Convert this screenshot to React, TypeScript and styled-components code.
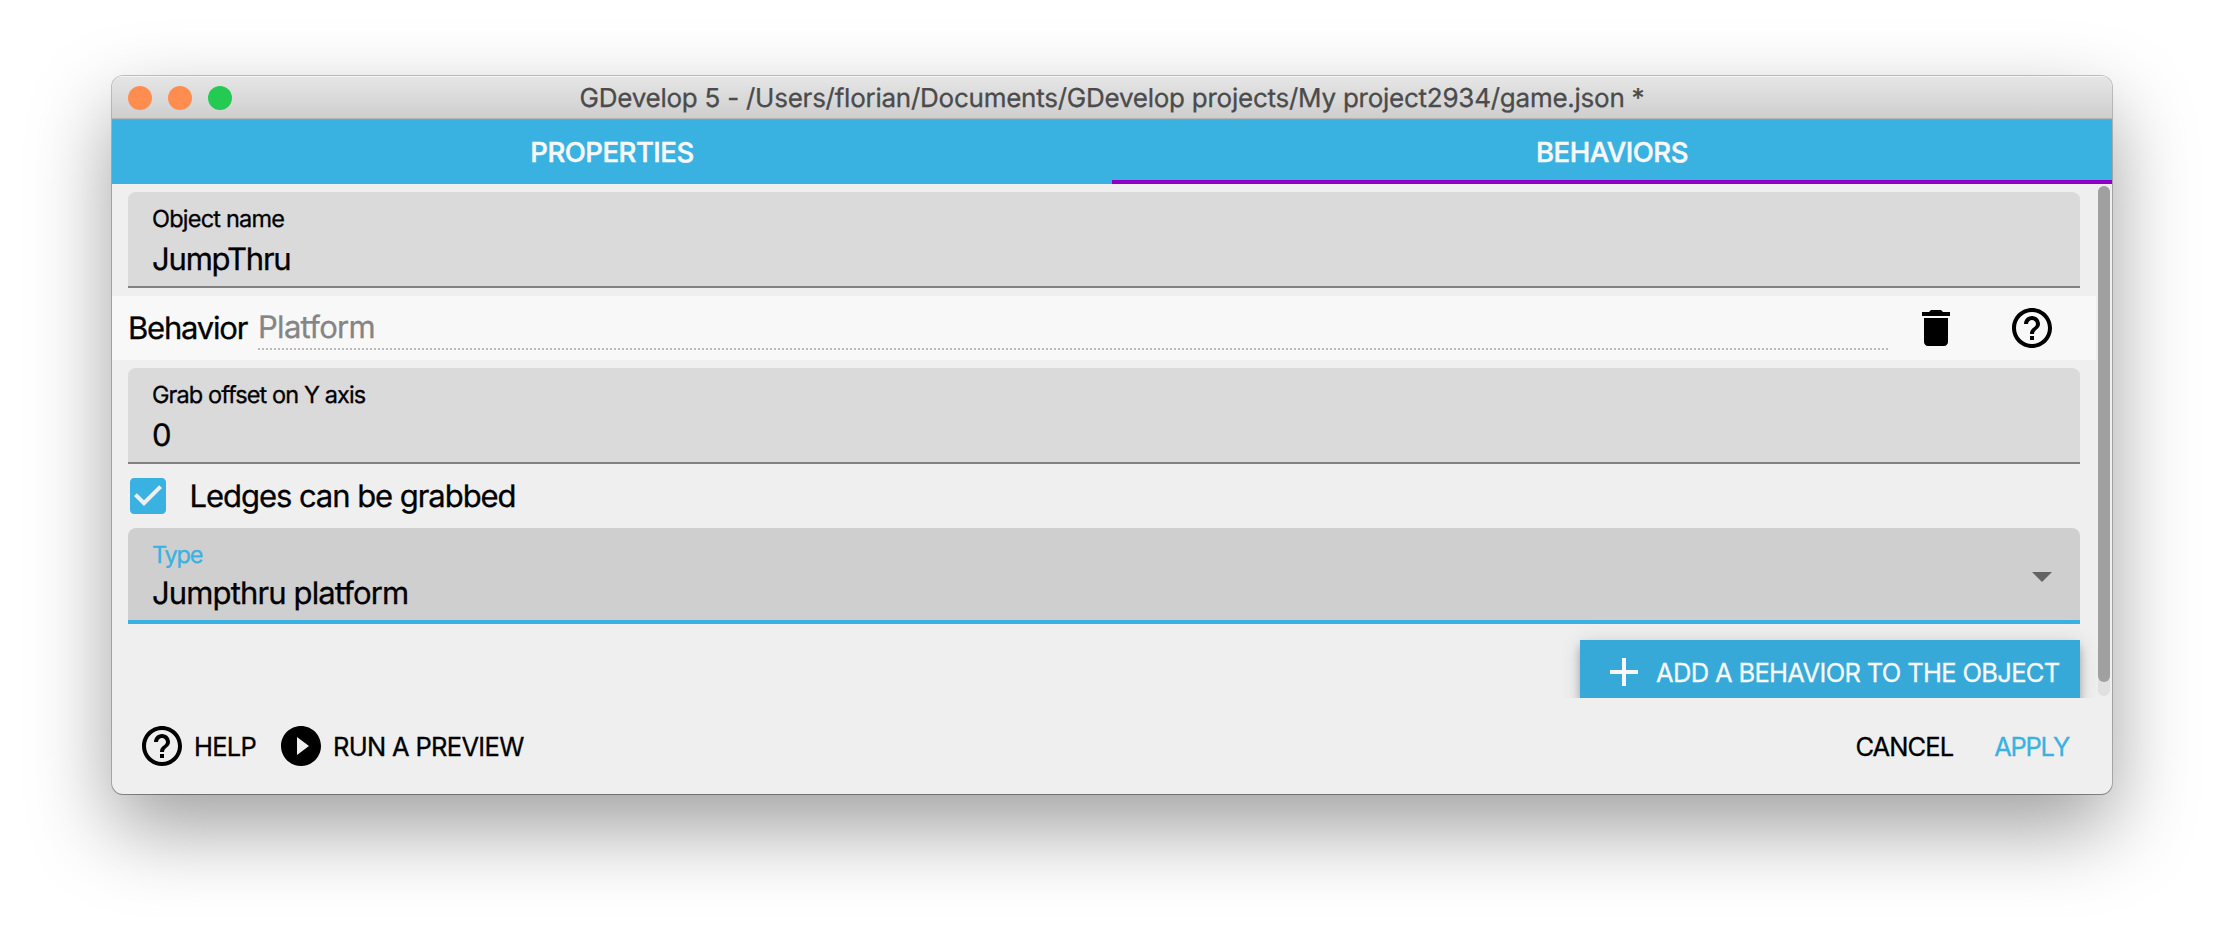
import React from 'react';
import styled, { createGlobalStyle } from 'styled-components';

const GlobalStyle = createGlobalStyle`
  * { box-sizing: border-box; }
  body {
    margin: 0;
    background: #ffffff;
    color: #000000;
    font-family: Inter, Roboto, "Liberation Sans", sans-serif;
    text-rendering: geometricPrecision;
    -webkit-text-stroke: 0.3px currentColor;
  }
`;

const Desktop = styled.main`
  width: 2224px;
  height: 942px;
  padding: 76px 112px 148px;
  overflow: hidden;
`;

const AppWindow = styled.section`
  display: flex;
  flex-direction: column;
  height: 718px;
  border-radius: 11px;
  overflow: hidden;
  background: #efefef;
  box-shadow:
    0 1px 0 0 rgba(0, 0, 0, 0.2),
    0 0 0 1px rgba(0, 0, 0, 0.22),
    0 34px 82px rgba(0, 0, 0, 0.38);
`;

const TitleBar = styled.header`
  display: grid;
  grid-template-columns: 1fr auto 1fr;
  align-items: center;
  height: 44px;
  padding: 0 16px;
  background: linear-gradient(#e6e6e6, #cecece);
  border-bottom: 1px solid #999999;
  box-shadow: inset 0 1px 0 #f4f4f4, inset 0 -1px 0 #b4b4b4;
`;

const Lights = styled.div`
  display: flex;
  gap: 16px;
  padding-top: 1px;
`;

const Light = styled.span<{ $color: string }>`
  width: 24px;
  height: 24px;
  border-radius: 50%;
  background: ${(p) => p.$color};
`;

const WindowTitle = styled.h1`
  margin: 0;
  padding-top: 3px;
  font-size: 26px;
  font-weight: 400;
  line-height: 40px;
  letter-spacing: -0.247px;
  color: #4b4b4b;
  white-space: nowrap;
`;

const Tabs = styled.nav`
  display: grid;
  grid-template-columns: 1fr 1fr;
  height: 64px;
  background: #39b2e2;
`;

const Tab = styled.button<{ $active?: boolean; $tracking: number }>`
  padding: 0;
  border: 0;
  background: none;
  box-shadow: ${(p) => (p.$active ? 'inset 0 -4px 0 #8f00c7' : 'none')};
  color: #f8f8f8;
  font: 500 27.5px/64px Inter, sans-serif;
  letter-spacing: ${(p) => p.$tracking}px;
  -webkit-text-stroke: 0.5px currentColor;
`;

const ScrollArea = styled.div`
  display: flex;
  height: 514px;
  overflow: hidden;
`;

const Content = styled.div`
  flex: 1;
  padding-top: 8px;
`;

const ScrollTrack = styled.div`
  width: 12px;
  height: 510px;
  margin: 2px 2px 0;
  border-radius: 6px;
  background: #e0e0e0;
`;

const ScrollThumb = styled.div`
  height: 496px;
  border-radius: 6px;
  background: #a0a0a0;
`;

const Field = styled.div<{ $focused?: boolean }>`
  display: flex;
  align-items: center;
  justify-content: space-between;
  height: 96px;
  margin: 0 16px;
  padding-left: 24px;
  border-radius: 8px 8px 0 0;
  background: ${(p) => (p.$focused ? '#cfcfcf' : '#dadada')};
  box-shadow: inset 0 ${(p) => (p.$focused ? '-4px 0 #39b2e2' : '-2px 0 #808080')};
`;

const FieldText = styled.div<{ $gap: number }>`
  display: flex;
  flex-direction: column;
  align-self: flex-start;
  gap: ${(p) => p.$gap}px;
  padding-top: 13px;
`;

const FieldLabel = styled.label<{ $focused?: boolean; $tracking: number }>`
  font-size: 23.5px;
  line-height: 28px;
  letter-spacing: ${(p) => p.$tracking}px;
  color: ${(p) => (p.$focused ? '#39b2e2' : '#000000')};
`;

const FieldValue = styled.span<{ $tracking?: number }>`
  font-size: 31px;
  line-height: 40px;
  letter-spacing: ${(p) => p.$tracking ?? 0}px;
`;

const Icon = styled.svg`
  display: block;
  flex: none;
  width: 48px;
  height: 48px;
  fill: currentColor;
`;

const SelectArrow = styled(Icon)`
  margin-right: 14px;
  color: #636363;
`;

const BehaviorRow = styled.div`
  display: flex;
  align-items: center;
  height: 64px;
  margin: 8px 0;
  padding: 0 40px 0 16px;
  background: #f8f8f8;
`;

const BehaviorTitle = styled.span`
  width: 130px;
  padding-top: 2px;
  font-size: 31px;
  line-height: 62px;
  letter-spacing: -1.2px;
`;

const BehaviorName = styled.div`
  flex: 1;
  align-self: flex-start;
  height: 44px;
  margin: 10px 24px 0 0;
  font-size: 31px;
  line-height: 43px;
  letter-spacing: -0.7px;
  color: #858585;
  background: repeating-linear-gradient(90deg, #bcbcbc 0 2px, transparent 2px 4px) 0 100% / 100% 2px no-repeat;
`;

const RowActions = styled.div`
  display: flex;
  gap: 48px;
`;

const CheckRow = styled.label`
  display: flex;
  align-items: center;
  height: 64px;
  padding-left: 12px;
`;

const CheckIcon = styled(Icon)`
  color: #39b2e2;
`;

const CheckLabel = styled.span`
  margin-left: 17.5px;
  padding-top: 2px;
  font-size: 31px;
  line-height: 62px;
  letter-spacing: -1.05px;
`;

const AddRow = styled.div`
  display: flex;
  justify-content: flex-end;
  padding: 16px 16px 0;
`;

const AddButton = styled.button`
  display: flex;
  align-items: center;
  gap: 8px;
  width: 500px;
  height: 64px;
  padding: 0 20px;
  border: 0;
  background: #36a9d8;
  color: #f8f8f8;
  font: 400 25.5px/64px Inter, sans-serif;
  letter-spacing: -0.66px;
  white-space: nowrap;
  box-shadow:
    0 4px 8px -2px rgba(0, 0, 0, 0.2),
    0 8px 10px rgba(0, 0, 0, 0.14),
    0 2px 20px rgba(0, 0, 0, 0.12);
`;

const ButtonText = styled.span`
  padding-top: 2px;
  line-height: 48px;
`;

const Footer = styled.footer`
  display: flex;
  align-items: center;
  justify-content: space-between;
  height: 96px;
  padding: 0 43px 0 26px;
`;

const FooterGroup = styled.div<{ $gap: number }>`
  display: flex;
  gap: ${(p) => p.$gap}px;
`;

const FlatButton = styled.button<{ $primary?: boolean; $tracking: number }>`
  display: flex;
  align-items: center;
  gap: 8px;
  padding: 0;
  border: 0;
  background: none;
  color: ${(p) => (p.$primary ? '#39b2e2' : '#000000')};
  font: 400 25.5px/48px Inter, sans-serif;
  letter-spacing: ${(p) => p.$tracking}px;
  white-space: nowrap;
`;

const HelpGlyph = () => (
  <Icon viewBox="0 0 24 24">
    <path d="M11 18h2v-2h-2v2zm1-16C6.48 2 2 6.48 2 12s4.48 10 10 10 10-4.48 10-10S17.52 2 12 2zm0 18c-4.41 0-8-3.59-8-8s3.59-8 8-8 8 3.59 8 8-3.59 8-8 8zm0-14c-2.21 0-4 1.79-4 4h2c0-1.1.9-2 2-2s2 .9 2 2c0 2-3 1.75-3 5h2c0-2.25 3-2.5 3-5 0-2.21-1.79-4-4-4z" />
  </Icon>
);

export default function App() {
  return (
    <>
      <GlobalStyle />
      <Desktop>
        <AppWindow>
          <TitleBar>
            <Lights>
              <Light $color="#ff8d50" />
              <Light $color="#ff8d50" />
              <Light $color="#24ca52" />
            </Lights>
            <WindowTitle>GDevelop 5 - /Users/florian/Documents/GDevelop projects/My project2934/game.json *</WindowTitle>
          </TitleBar>

          <Tabs>
            <Tab $tracking={-0.49}>PROPERTIES</Tab>
            <Tab $active $tracking={-0.48}>BEHAVIORS</Tab>
          </Tabs>

          <ScrollArea>
            <Content>
              <Field>
                <FieldText $gap={7}>
                  <FieldLabel $tracking={-0.78}>Object name</FieldLabel>
                  <FieldValue $tracking={-1.2}>JumpThru</FieldValue>
                </FieldText>
              </Field>

              <BehaviorRow>
                <BehaviorTitle>Behavior</BehaviorTitle>
                <BehaviorName>Platform</BehaviorName>
                <RowActions>
                  <Icon viewBox="0 0 24 24">
                    <path d="M6 19c0 1.1.9 2 2 2h8c1.1 0 2-.9 2-2V7H6v12zM19 4h-3.5l-1-1h-5l-1 1H5v2h14V4z" />
                  </Icon>
                  <HelpGlyph />
                </RowActions>
              </BehaviorRow>

              <Field>
                <FieldText $gap={7}>
                  <FieldLabel $tracking={-0.91}>Grab offset on Y axis</FieldLabel>
                  <FieldValue>0</FieldValue>
                </FieldText>
              </Field>

              <CheckRow>
                <CheckIcon viewBox="0 0 24 24">
                  <path d="M19 3H5c-1.11 0-2 .9-2 2v14c0 1.1.89 2 2 2h14c1.11 0 2-.9 2-2V5c0-1.1-.89-2-2-2zm-9 14l-5-5 1.41-1.41L10 14.17l7.59-7.59L19 8l-9 9z" />
                </CheckIcon>
                <CheckLabel>Ledges can be grabbed</CheckLabel>
              </CheckRow>

              <Field $focused>
                <FieldText $gap={5}>
                  <FieldLabel $focused $tracking={-1.2}>Type</FieldLabel>
                  <FieldValue $tracking={-0.87}>Jumpthru platform</FieldValue>
                </FieldText>
                <SelectArrow viewBox="0 0 24 24">
                  <path d="M7 10l5 5 5-5z" />
                </SelectArrow>
              </Field>

              <AddRow>
                <AddButton>
                  <Icon viewBox="0 0 24 24">
                    <path d="M19 13h-6v6h-2v-6H5v-2h6V5h2v6h6v2z" />
                  </Icon>
                  <ButtonText>ADD A BEHAVIOR TO THE OBJECT</ButtonText>
                </AddButton>
              </AddRow>
            </Content>
            <ScrollTrack>
              <ScrollThumb />
            </ScrollTrack>
          </ScrollArea>

          <Footer>
            <FooterGroup $gap={21}>
              <FlatButton $tracking={-0.75}>
                <HelpGlyph />
                <ButtonText>HELP</ButtonText>
              </FlatButton>
              <FlatButton $tracking={-0.68}>
                <Icon viewBox="0 0 24 24">
                  <path d="M12 2C6.48 2 2 6.48 2 12s4.48 10 10 10 10-4.48 10-10S17.52 2 12 2zm-2 14.5v-9l6 4.5-6 4.5z" />
                </Icon>
                <ButtonText>RUN A PREVIEW</ButtonText>
              </FlatButton>
            </FooterGroup>
            <FooterGroup $gap={41}>
              <FlatButton $tracking={-0.92}>
                <ButtonText>CANCEL</ButtonText>
              </FlatButton>
              <FlatButton $primary $tracking={-1.25}>
                <ButtonText>APPLY</ButtonText>
              </FlatButton>
            </FooterGroup>
          </Footer>
        </AppWindow>
      </Desktop>
    </>
  );
}
